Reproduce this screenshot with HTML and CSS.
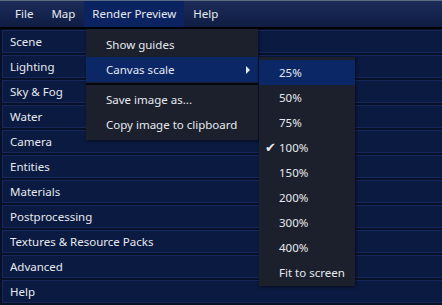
FILE: index.html
```html
<!DOCTYPE html>
<html>
<head>
    <title>Render Preview</title>
    <link rel="stylesheet" href="styles.css">
</head>
<body>
    <div id="menubar">
        <div class="menu">File</div>
        <div class="menu">Map</div>
        <div class="menu open">Render Preview</div>
        <div class="menu">Help</div>
    </div>
    <div id="panel">
        <div class="row">Scene</div>
        <div class="row">Lighting</div>
        <div class="row">Sky &amp; Fog</div>
        <div class="row">Water</div>
        <div class="row">Camera</div>
        <div class="row">Entities</div>
        <div class="row">Materials</div>
        <div class="row">Postprocessing</div>
        <div class="row">Textures &amp; Resource Packs</div>
        <div class="row">Advanced</div>
        <div class="row">Help</div>
    </div>
    <div id="dropdown" class="popup">
        <div class="item">Show guides</div>
        <div class="item active">Canvas scale<span class="arrow"></span></div>
        <div class="sep"></div>
        <div class="item">Save image as...</div>
        <div class="item">Copy image to clipboard</div>
    </div>
    <div id="submenu" class="popup">
        <div class="item active">25%</div>
        <div class="item">50%</div>
        <div class="item">75%</div>
        <div class="item"><span class="check">&#10004;</span>100%</div>
        <div class="item">150%</div>
        <div class="item">200%</div>
        <div class="item">300%</div>
        <div class="item">400%</div>
        <div class="item">Fit to screen</div>
    </div>
</body>
</html>
```

FILE: styles.css
```css
html, body {
    margin: 0;
    padding: 0;
    overflow: hidden;
}

body {
    width: 442px;
    height: 305px;
    background-color: #07112a;
    font-family: "Noto Sans", sans-serif;
    font-size: 11.5px;
    color: #e6eaf0;
    position: relative;
}

#menubar {
    display: flex;
    height: 29px;
    padding-left: 6px;
    background: linear-gradient(#1c2c58, #0f1d44);
    border-top: 1px solid #5a6a80;
    border-bottom: 2px solid #000000;
    box-sizing: border-box;
}

    #menubar .menu {
        padding: 0 9px;
        line-height: 25px;
    }

    #menubar .open {
        padding: 0 8px;
        background-color: #0b2360;
    }

#panel {
    display: flex;
    flex-direction: column;
    gap: 2px;
    padding: 1px 0 0 2px;
}

.row {
    height: 23px;
    line-height: 22px;
    padding-left: 7px;
    background-color: #0b1a40;
    border: 1px solid #17275a;
    border-right: none;
    box-sizing: border-box;
}

.popup {
    position: absolute;
    background-color: #1c202c;
    box-shadow: 1px 1px 3px rgba(0, 0, 0, 0.6);
    padding: 3px 0;
    white-space: nowrap;
}

    .popup .item {
        height: 25px;
        line-height: 25px;
        padding-left: 20px;
        position: relative;
    }

    .popup .active {
        background-color: #0b2766;
    }

#dropdown {
    left: 86px;
    top: 29px;
    width: 172px;
}

    #dropdown .sep {
        height: 2px;
        background-color: #05070c;
        margin: 1px 0 2px;
    }

.arrow {
    position: absolute;
    right: 8px;
    top: 9px;
    border-left: 4px solid #e6eaf0;
    border-top: 4px solid transparent;
    border-bottom: 4px solid transparent;
}

#submenu {
    left: 259px;
    top: 57px;
    width: 96px;
    padding-bottom: 1px;
}

.check {
    position: absolute;
    left: 6px;
    font-size: 13px;
}
```
